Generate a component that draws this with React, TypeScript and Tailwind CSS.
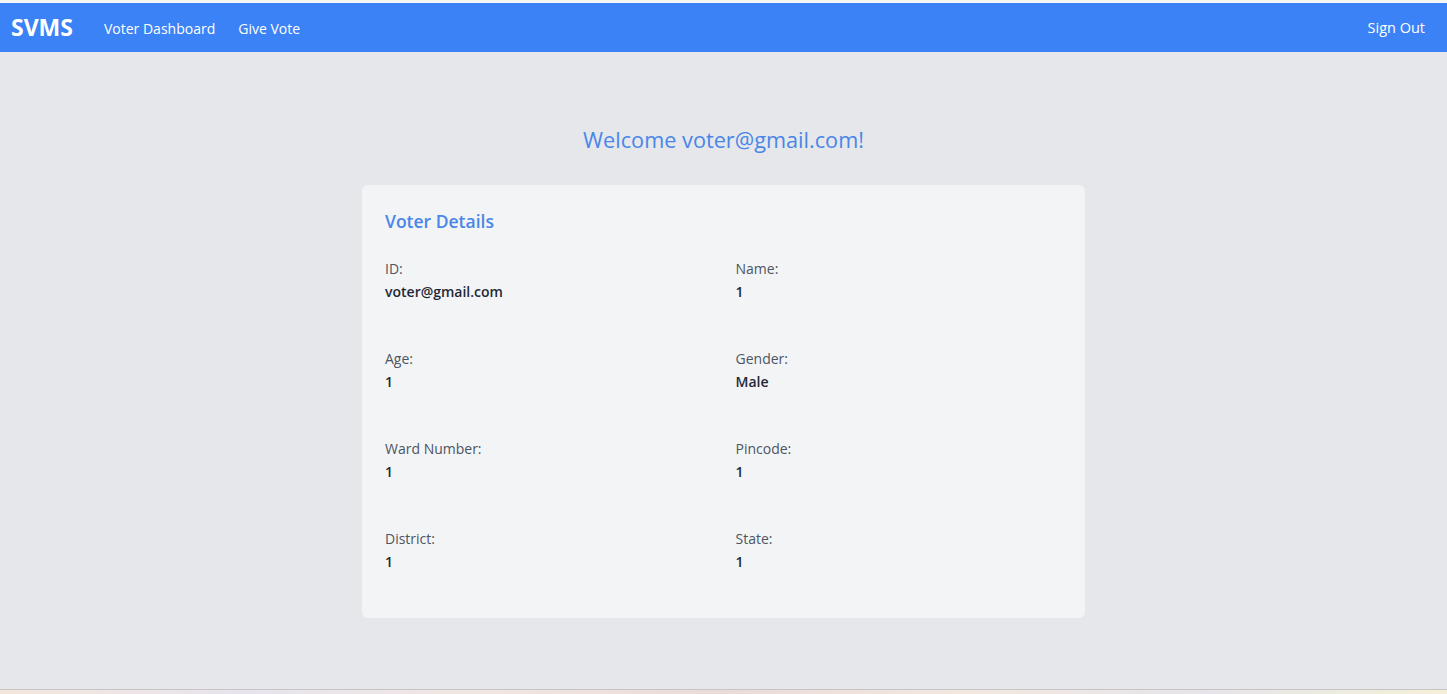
import React from "react";

const fields: [string, string][] = [
  ["ID:", "voter@gmail.com"],
  ["Name:", "1"],
  ["Age:", "1"],
  ["Gender:", "Male"],
  ["Ward Number:", "1"],
  ["Pincode:", "1"],
  ["District:", "1"],
  ["State:", "1"],
];

export default function App() {
  return (
    <div
      className="h-[694px] flex flex-col bg-[#e5e7eb] overflow-hidden"
      style={{ fontFamily: '"Open Sans", "Noto Sans", sans-serif' }}
    >
      <div className="h-[3px] bg-[#f4f5f7]" />
      <nav className="h-[49px] bg-[#3b82f6] flex items-center pl-[11px] pr-[22px] text-white">
        <span className="text-[23px] font-bold mr-[31px] leading-none pb-[1px]">SVMS</span>
        <span className="text-[14px] mr-[23px] pt-[1px]">Voter Dashboard</span>
        <span className="text-[14px] pt-[1px]">Give Vote</span>
        <span className="ml-auto text-[14.5px] pt-[1px]">Sign Out</span>
      </nav>
      <main className="flex-1 flex flex-col items-center pt-[73px]">
        <h1 className="text-[21.7px] leading-[30px] text-[#4a86e8] mb-[30px]">Welcome voter@gmail.com!</h1>
        <div className="w-[723px] bg-[#f3f4f6] rounded-md pt-[22px] px-[23px] pb-[46px]">
          <h2 className="text-[17.5px] leading-[28px] font-semibold text-[#4a86e8] mb-[24px]">Voter Details</h2>
          <div className="grid grid-cols-2 gap-x-6 gap-y-[47px]">
            {fields.map(([k, v]) => (
              <div key={k}>
                <div className="text-[14px] leading-[20px] text-[#4b5563]">{k}</div>
                <div className="text-[14px] leading-[20px] mt-[3px] font-semibold text-[#1f2937]">{v}</div>
              </div>
            ))}
          </div>
        </div>
      </main>
      <div className="h-px bg-[#c9c5c5]" />
      <div className="h-[4px] bg-[linear-gradient(90deg,#f3e6dc,#e8e4ee,#f0e6e2,#eadada,#f2e8e0,#e6e4ea,#f4f0d8)]" />
    </div>
  );
}
